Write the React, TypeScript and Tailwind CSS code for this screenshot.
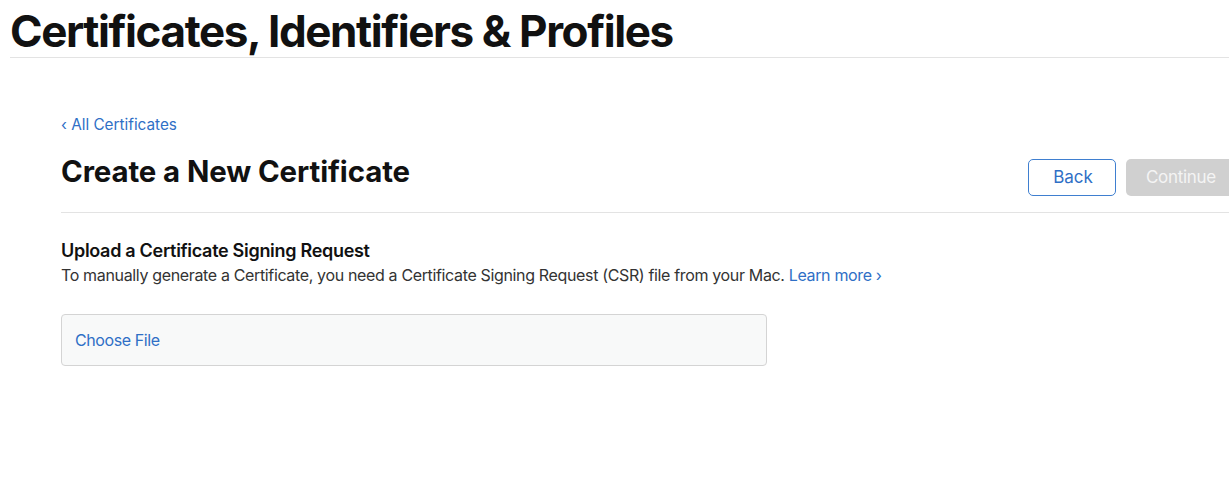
import React from "react";

export default function App() {
  return (
    <div className="w-[1229px] h-[504px] bg-white overflow-hidden" style={{ fontFamily: "Inter, 'Liberation Sans', sans-serif" }}>
      <div className="pl-[10px]">
        <h1 className="text-[44px] leading-[56px] font-bold text-[#111] tracking-[-1.4px] pt-[3px]">Certificates, Identifiers &amp; Profiles</h1>
        <div className="h-px bg-[#e3e3e3] mt-[-2px]" />
      </div>
      <div className="pl-[61px]">
        <div className="pt-[56px] text-[15.3px] leading-[22px] text-[#2f6fc6]">‹ All Certificates</div>
        <div className="flex items-end justify-between mt-[18px]">
          <h2 className="text-[29.4px] leading-[36px] font-bold text-[#111] pb-[5px] tracking-[-0.1px]">Create a New Certificate</h2>
          <div className="flex gap-[10px] mr-[-20px] mb-[-1px]">
            <button className="w-[88px] h-[37px] border border-[#3f7fd0] rounded-[5px] text-[17px] text-[#2f6fc6] pl-[2px]">Back</button>
            <button className="w-[123px] h-[37px] bg-[#d0d0d0] rounded-[5px] text-[17px] text-[#f4f4f4] text-left pl-[20px] tracking-[-0.3px]">Continue</button>
          </div>
        </div>
        <div className="h-px bg-[#e3e3e3] mt-[17px]" />
        <h3 className="mt-[26px] text-[18px] leading-[24px] font-semibold text-[#111] tracking-[-0.3px]">Upload a Certificate Signing Request</h3>
        <p className="text-[16px] leading-[24px] text-[#333] tracking-[-0.35px]">
          To manually generate a Certificate, you need a Certificate Signing Request (CSR) file from your Mac.{" "}
          <span className="text-[#2f6fc6]">Learn more ›</span>
        </p>
        <div className="mt-[27px] w-[706px] h-[52px] bg-[#f8f9f9] border border-[#d4d4d4] rounded-[4px] flex items-center pl-[13px]">
          <span className="text-[16px] text-[#2f6fc6] tracking-[-0.4px]">Choose File</span>
        </div>
      </div>
    </div>
  );
}
